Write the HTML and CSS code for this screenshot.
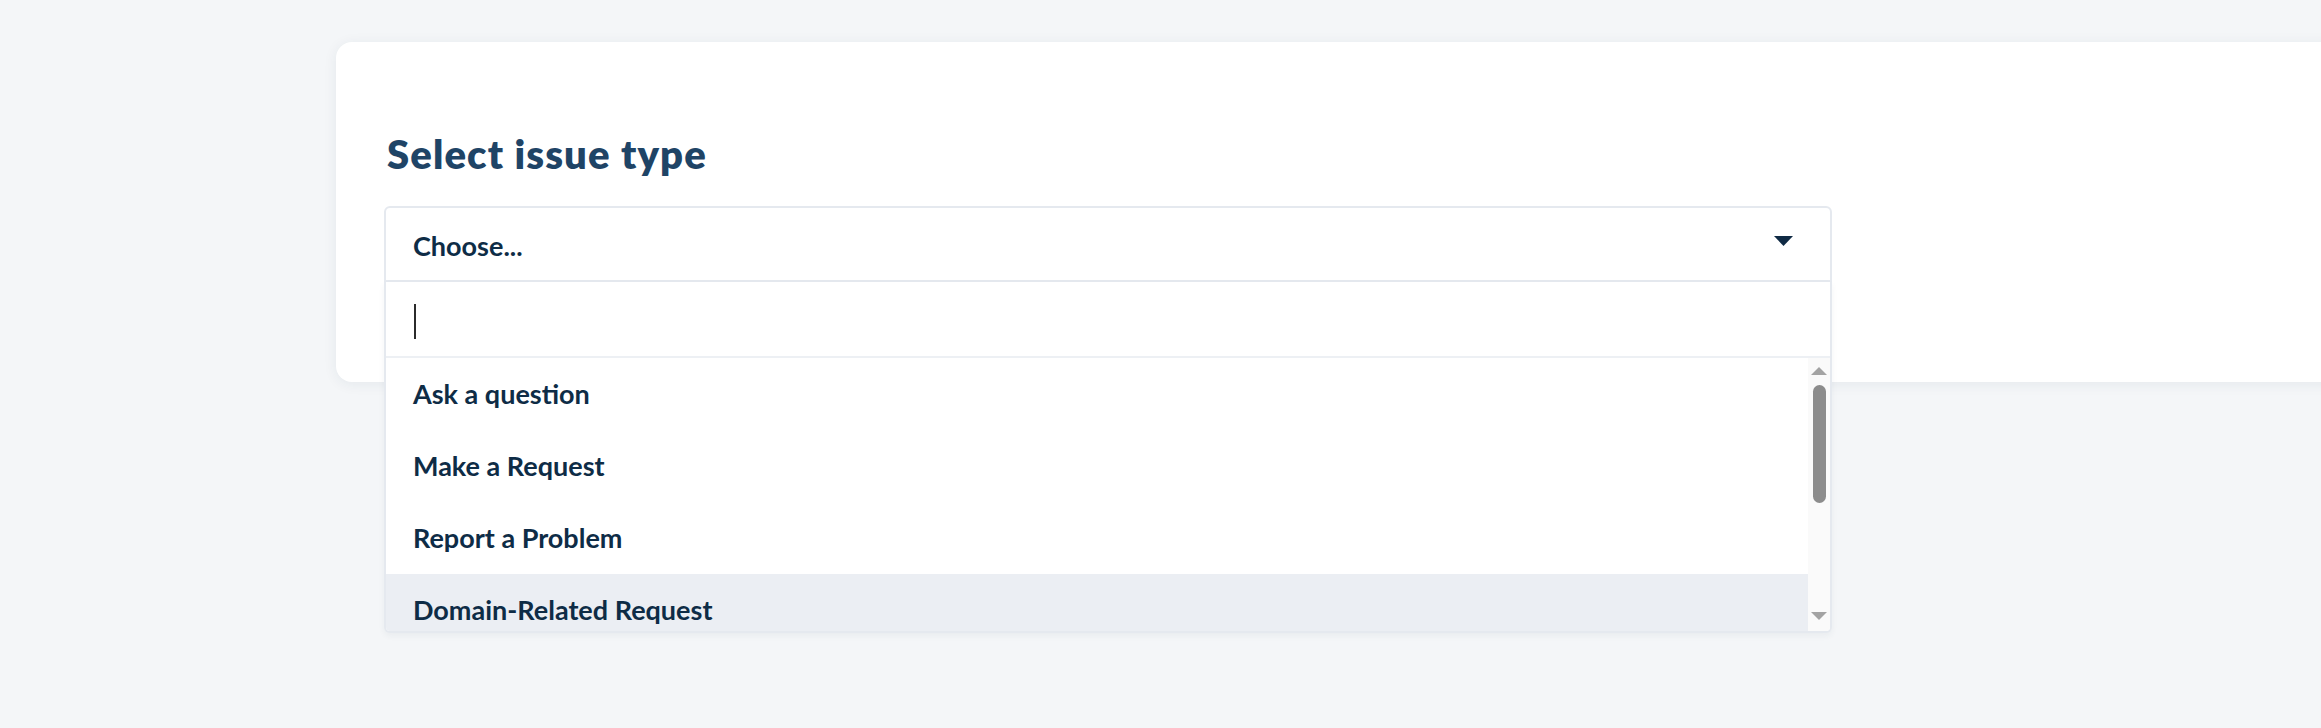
FILE: index.html
```html
<!DOCTYPE html>
<html lang="en">
<head>
<meta charset="utf-8">
<title>Select issue type</title>
<link rel="stylesheet" href="styles.css">
</head>
<body>
<main class="page">
  <section class="card">
    <h2 class="title">Select issue type</h2>
    <div class="select">
      <div class="select-head">
        <span class="select-value">Choose...</span>
        <svg class="chevron" width="19" height="10" viewBox="0 0 19 10"><path d="M0 0H19L9.5 10Z" fill="#0f2a44"/></svg>
      </div>
      <div class="dropdown">
        <div class="search"><span class="caret"></span></div>
        <div class="list-wrap">
          <ul class="list">
            <li class="item">Ask a question</li>
            <li class="item">Make a Request</li>
            <li class="item">Report a Problem</li>
            <li class="item item-active">Domain-Related Request</li>
          </ul>
          <div class="scrollbar">
            <svg class="arrow" width="16" height="8" viewBox="0 0 16 8"><path d="M0 8H16L8 0Z" fill="#a3a3a3"/></svg>
            <div class="track"><div class="thumb"></div></div>
            <svg class="arrow" width="16" height="8" viewBox="0 0 16 8"><path d="M0 0H16L8 8Z" fill="#a3a3a3"/></svg>
          </div>
        </div>
      </div>
    </div>
  </section>
</main>
</body>
</html>
```
FILE: styles.css
```css
html, body {
  margin: 0;
  padding: 0;
}
body {
  background: #f4f6f8;
  font-family: Lato, "Noto Sans", "Liberation Sans", sans-serif;
  overflow: hidden;
  width: 2321px;
  height: 728px;
}
.page {
  padding: 42px 0 0 336px;
}
.card {
  box-sizing: border-box;
  width: 2100px;
  height: 340px;
  background: #ffffff;
  border-radius: 16px;
  box-shadow: 0 2px 14px rgba(30, 50, 80, 0.07);
  padding: 89px 48px 0 48px;
}
.title {
  margin: 0 0 0 3px;
  font-size: 40px;
  line-height: 46px;
  font-weight: 800;
  letter-spacing: 1.1px;
  color: #1f4466;
}
.select {
  position: relative;
  width: 1448px;
  margin-top: 29px;
}
.select-head {
  box-sizing: border-box;
  height: 76px;
  border: 2px solid #e5e9ef;
  border-radius: 6px 6px 0 0;
  display: flex;
  align-items: center;
  justify-content: space-between;
  padding: 0 37px 0 27px;
}
.select-value {
  font-size: 27px;
  font-weight: 700;
  color: #0e2c46;
  margin-top: 3px;
}
.chevron {
  display: block;
  margin-top: -6px;
}
.dropdown {
  position: absolute;
  left: 0;
  right: 0;
  top: 100%;
  box-sizing: border-box;
  border: 2px solid #e5e9ef;
  border-top: 0;
  border-radius: 0 0 6px 6px;
  background: #ffffff;
  overflow: hidden;
  box-shadow: 0 3px 6px rgba(30, 50, 80, 0.05);
}
.search {
  height: 74px;
  border-bottom: 2px solid #edf0f4;
  display: flex;
  align-items: center;
  padding-left: 28px;
}
.caret {
  display: block;
  width: 2px;
  height: 35px;
  background: #2b2b2b;
  margin-top: 4px;
}
.list-wrap {
  display: flex;
  height: 273px;
}
.list {
  flex: 1;
  list-style: none;
  margin: 0;
  padding: 0;
  overflow: hidden;
}
.item {
  box-sizing: border-box;
  height: 72px;
  flex-shrink: 0;
  display: flex;
  align-items: center;
  padding: 0 0 2px 27px;
  font-size: 27px;
  font-weight: 700;
  color: #0e2c46;
}
.item-active {
  background: #ebeef3;
}
.scrollbar {
  width: 22px;
  background: #fafafa;
  display: flex;
  flex-direction: column;
  align-items: center;
  padding: 9px 0 11px;
  box-sizing: border-box;
}
.arrow {
  display: block;
  flex-shrink: 0;
}
.track {
  flex: 1;
  width: 100%;
  display: flex;
  justify-content: center;
  padding-top: 10px;
}
.thumb {
  width: 13px;
  height: 118px;
  border-radius: 7px;
  background: #8c8c8c;
}
```
